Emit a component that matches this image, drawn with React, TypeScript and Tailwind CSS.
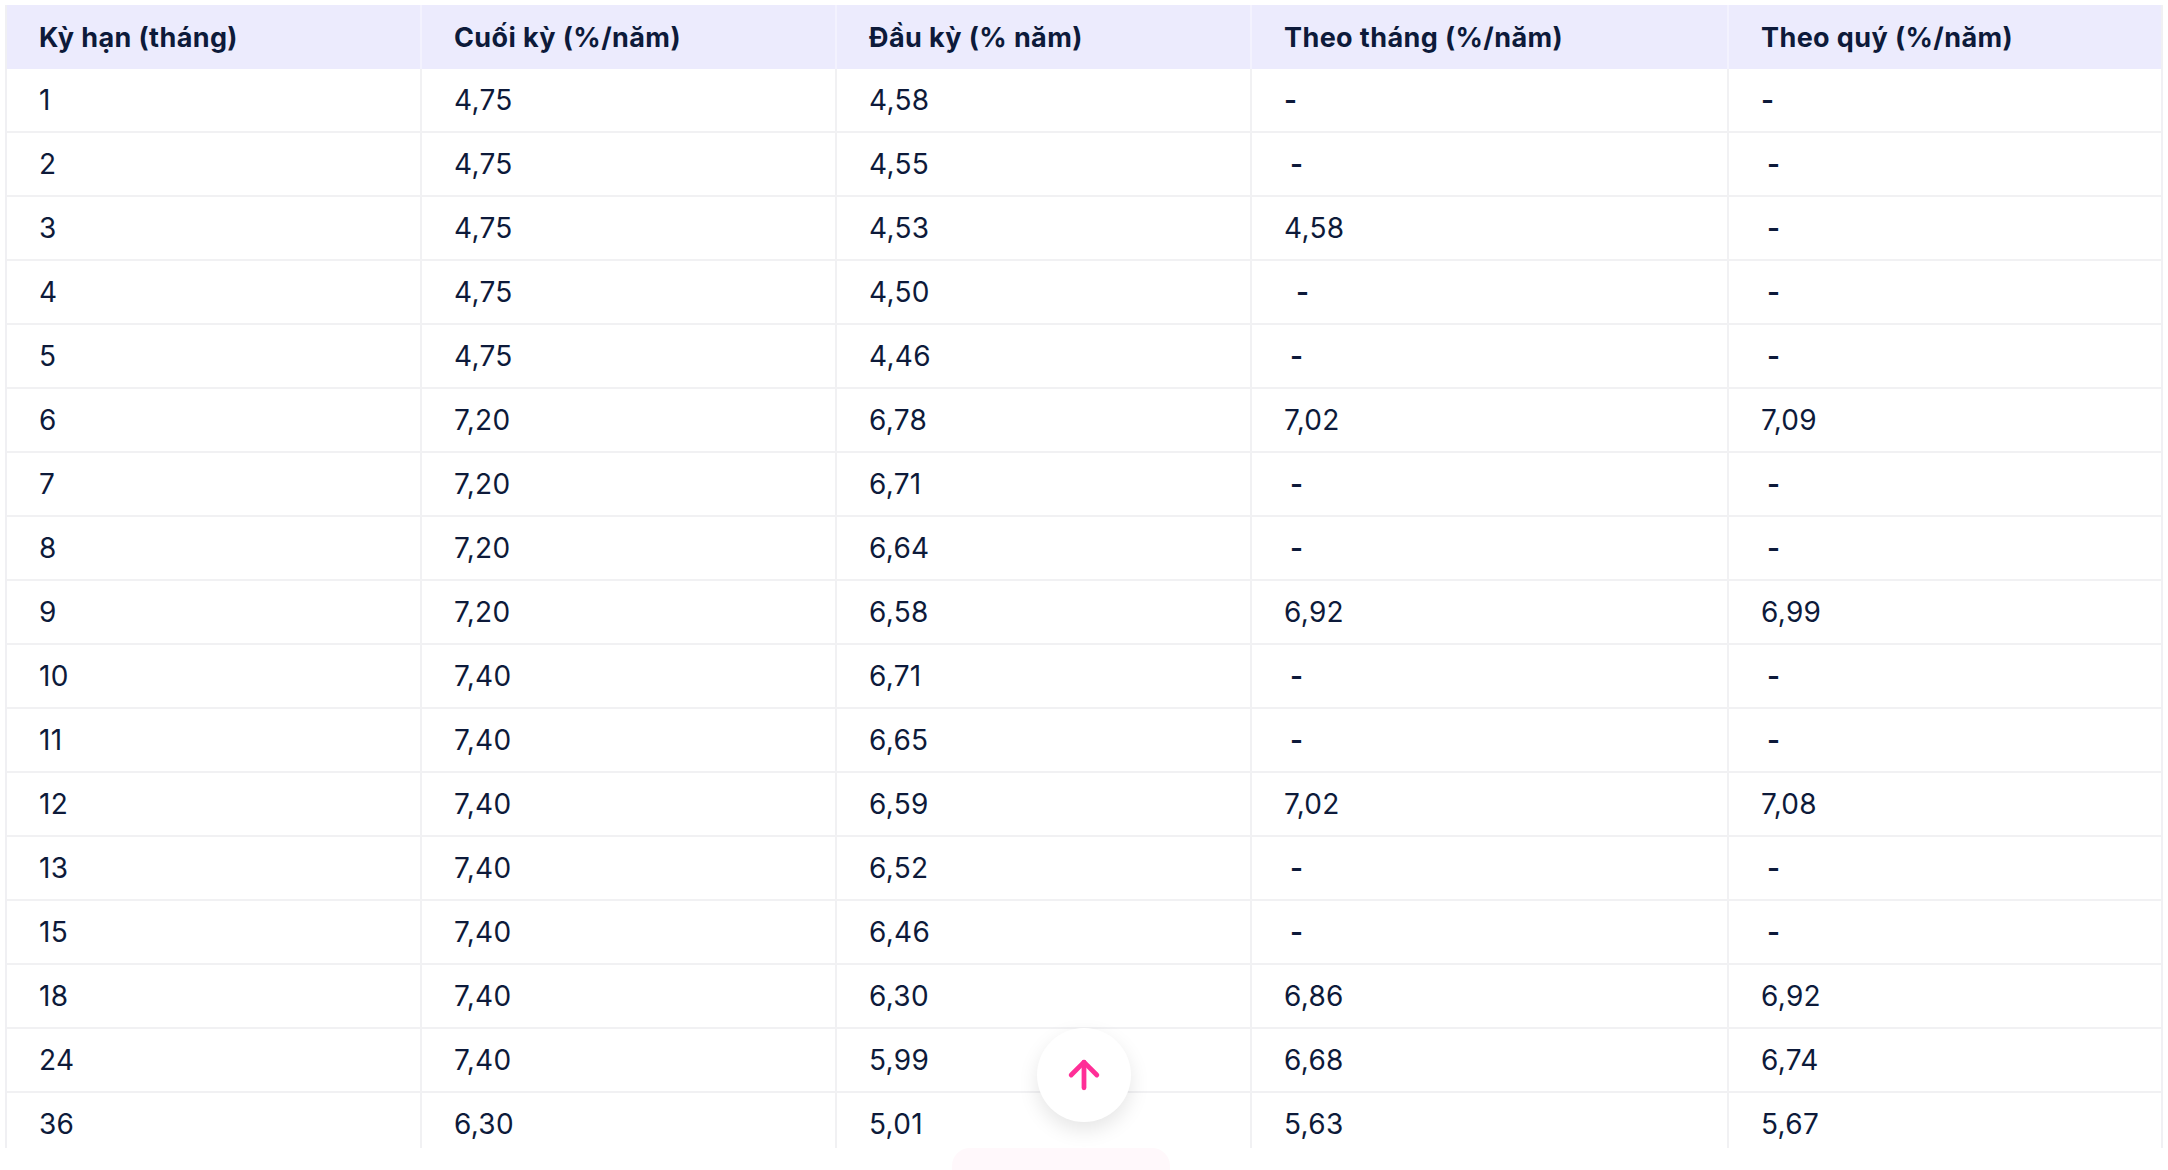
import { ArrowUp } from 'lucide-react';

interface RateRow {
  term: string;
  end: string;
  start: string;
  monthly: string;
  quarterly: string;
}

// "-" = không áp dụng; "~" = dấu gạch lệch một khoảng, "≈" = lệch hai khoảng (giống bản gốc)
const rows: RateRow[] = [
  { term: '1', end: '4,75', start: '4,58', monthly: '-', quarterly: '-' },
  { term: '2', end: '4,75', start: '4,55', monthly: '~', quarterly: '~' },
  { term: '3', end: '4,75', start: '4,53', monthly: '4,58', quarterly: '~' },
  { term: '4', end: '4,75', start: '4,50', monthly: '≈', quarterly: '~' },
  { term: '5', end: '4,75', start: '4,46', monthly: '~', quarterly: '~' },
  { term: '6', end: '7,20', start: '6,78', monthly: '7,02', quarterly: '7,09' },
  { term: '7', end: '7,20', start: '6,71', monthly: '~', quarterly: '~' },
  { term: '8', end: '7,20', start: '6,64', monthly: '~', quarterly: '~' },
  { term: '9', end: '7,20', start: '6,58', monthly: '6,92', quarterly: '6,99' },
  { term: '10', end: '7,40', start: '6,71', monthly: '~', quarterly: '~' },
  { term: '11', end: '7,40', start: '6,65', monthly: '~', quarterly: '~' },
  { term: '12', end: '7,40', start: '6,59', monthly: '7,02', quarterly: '7,08' },
  { term: '13', end: '7,40', start: '6,52', monthly: '~', quarterly: '~' },
  { term: '15', end: '7,40', start: '6,46', monthly: '~', quarterly: '~' },
  { term: '18', end: '7,40', start: '6,30', monthly: '6,86', quarterly: '6,92' },
  { term: '24', end: '7,40', start: '5,99', monthly: '6,68', quarterly: '6,74' },
  { term: '36', end: '6,30', start: '5,01', monthly: '5,63', quarterly: '5,67' },
];

const headers = [
  'Kỳ hạn (tháng)',
  'Cuối kỳ (%/năm)',
  'Đầu kỳ (% năm)',
  'Theo tháng (%/năm)',
  'Theo quý (%/năm)',
];

const Value = ({ v }: { v: string }) => {
  if (v === '-') return <span className="font-semibold">-</span>;
  if (v === '~') return <span className="pl-[6px] font-semibold">-</span>;
  if (v === '≈') return <span className="pl-[12px] font-semibold">-</span>;
  return <span>{v}</span>;
};

const gridCols = 'grid grid-cols-[413px_415px_415px_477px_1fr]';

const App = () => {
  return (
    <div className="relative w-full h-[1170px] bg-white overflow-hidden font-['Inter',sans-serif] text-[#0d1a3a]">
      <div className="pt-[5px] px-[5px]">
        <div className="h-[1143px] overflow-hidden border-x-2 border-[#f0f0f3]">
          <div className={`${gridCols} h-[64px] bg-[#ecebfd] text-[27px] font-bold tracking-[0.4px]`}>
            {headers.map((h, i) => (
              <div
                key={h}
                className={`flex items-center pt-[2px] px-8 ${i > 0 ? 'border-l-2 border-[#f3f2fe]' : ''}`}
              >
                {h}
              </div>
            ))}
          </div>
          {rows.map((r) => (
            <div
              key={r.term}
              className={`${gridCols} h-[64px] border-b-2 border-[#f1f1f3] text-[28px] tracking-[0.3px]`}
            >
              <div className="flex items-center px-8">{r.term}</div>
              <div className="flex items-center px-8 border-l-2 border-[#f1f1f3]">{r.end}</div>
              <div className="flex items-center px-8 border-l-2 border-[#f1f1f3]">{r.start}</div>
              <div className="flex items-center px-8 border-l-2 border-[#f1f1f3]">
                <Value v={r.monthly} />
              </div>
              <div className="flex items-center px-8 border-l-2 border-[#f1f1f3]">
                <Value v={r.quarterly} />
              </div>
            </div>
          ))}
        </div>
      </div>

      <div className="absolute left-[952px] top-[1148px] w-[218px] h-[40px] rounded-t-[18px] bg-[#fff8fb]" />

      <button className="absolute left-[1037px] top-[1028px] w-[94px] h-[94px] rounded-full bg-white shadow-[0_8px_20px_rgba(0,0,0,0.10)] flex items-center justify-center">
        <ArrowUp className="w-[44px] h-[44px] text-[#ff2f97]" strokeWidth={2.6} />
      </button>
    </div>
  );
};

export default App;
